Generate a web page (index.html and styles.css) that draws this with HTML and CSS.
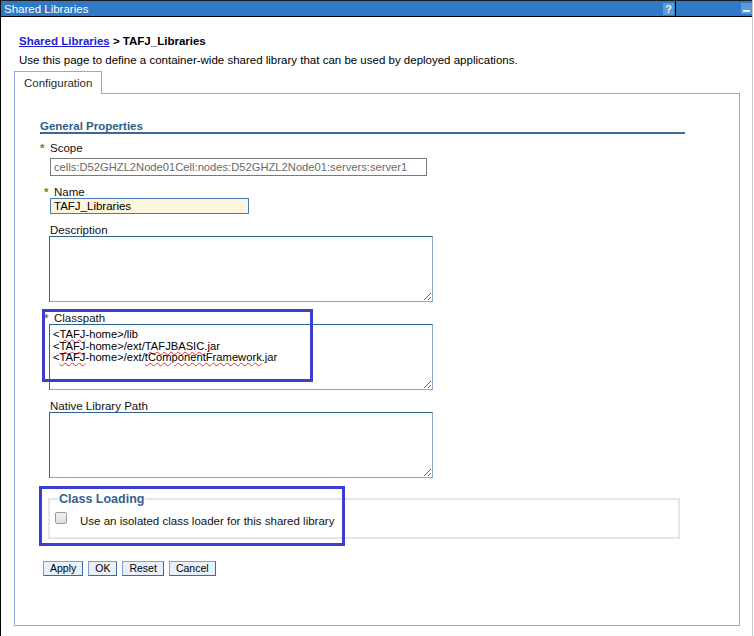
FILE: index.html
```html
<!DOCTYPE html>
<html lang="en">

<head>
    <meta charset="UTF-8">
    <meta name="viewport" content="width=device-width, initial-scale=1.0">
    <title>Shared Libraries</title>
    <link rel="stylesheet" href="styles.css">
</head>

<body>
    <div class="portlet">
        <div class="titlebar">
            <span class="title">Shared Libraries</span>
            <span class="help">?</span>
            <span class="divider"></span>
            <span class="minimize"></span>
        </div>

        <div class="content">
            <h1 class="crumb"><a href="#">Shared Libraries</a> &gt; TAFJ_Libraries</h1>
            <p class="intro">Use this page to define a container-wide shared library that can be used by deployed applications.</p>

            <div class="tabs">
                <span class="tab">Configuration</span>
            </div>

            <div class="panel">
                <h2 class="section">General Properties</h2>

                <div class="fields">
                    <label class="lbl req req_wide">Scope</label>
                    <input type="text" class="scope" value="cells:D52GHZL2Node01Cell:nodes:D52GHZL2Node01:servers:server1" readonly>

                    <label class="lbl req">Name</label>
                    <input type="text" class="name" value="TAFJ_Libraries">

                    <label class="lbl">Description</label>
                    <div class="area"></div>

                    <label class="lbl req">Classpath</label>
                    <div class="area">
                        <div>&lt;<span class="typo">TAFJ</span>-home&gt;/lib</div>
                        <div>&lt;<span class="typo">TAFJ</span>-home&gt;/ext/<span class="typo">TAFJBASIC</span>.jar</div>
                        <div>&lt;<span class="typo">TAFJ</span>-home&gt;/ext/<span class="typo">tComponentFramework</span>.jar</div>
                    </div>

                    <label class="lbl">Native Library Path</label>
                    <div class="area"></div>
                </div>

                <fieldset class="group">
                    <legend>Class Loading</legend>
                    <label class="check"><span class="box"></span><span class="check_text">Use an isolated class loader for this shared library</span></label>
                </fieldset>

                <div class="buttons">
                    <button type="button" class="btn">Apply</button>
                    <button type="button" class="btn">OK</button>
                    <button type="button" class="btn">Reset</button>
                    <button type="button" class="btn">Cancel</button>
                </div>

                <!-- marker frames drawn over the form -->
                <div class="mark mark_cp"></div>
                <div class="mark mark_cl"></div>
            </div>
        </div>
    </div>
</body>

</html>
```

FILE: styles.css
```css
* {
    margin: 0;
    padding: 0;
    box-sizing: border-box;
}

body {
    font-family: "Liberation Sans", Arial, sans-serif;
    font-size: 11.5px;
    color: #000;
    background: #fff;
}

.portlet {
    width: 753px;
    height: 636px;
    border-left: 1px solid #000;
    border-right: 1px solid #c9c9c9;
}

/* title bar */
.titlebar {
    height: 17px;
    background: #3079c7;
    border-top: 1px solid #1b1b1b;
    border-bottom: 1px solid #000;
    display: flex;
    align-items: center;
    color: #fff;
}

.title {
    flex: 1;
    padding-left: 3px;
    font-size: 11.5px;
    line-height: 14px;
}

.help {
    width: 11px;
    height: 12px;
    background: #5f98d6;
    color: #e8f1fb;
    font-size: 11px;
    font-weight: bold;
    line-height: 12px;
    text-align: center;
    margin-right: 1px;
}

.divider {
    width: 1px;
    align-self: stretch;
    background: #000;
}

.minimize {
    width: 11px;
    height: 11px;
    margin-left: 65px;
    background: #5f98d6;
    position: relative;
}

.minimize::after {
    content: "";
    position: absolute;
    left: 2px;
    right: 2px;
    bottom: 2px;
    height: 2px;
    background: #e8f1fb;
}

/* page body */
.content {
    padding: 18px 0 0 13px;
}

.crumb {
    font-size: 11.5px;
    font-weight: bold;
    line-height: 13px;
    margin-left: 5px;
}

.crumb a {
    color: #1d1dd8;
}

.intro {
    line-height: 13px;
    margin: 6px 0 0 5px;
}

.tabs {
    display: flex;
    margin-top: 4px;
}

.tab {
    position: relative;
    z-index: 1;
    height: 23px;
    padding: 0 9px;
    margin-bottom: -1px;
    border: 1px solid #8eaad8;
    border-bottom: none;
    background: #fff;
    color: #2a2a2a;
    line-height: 22px;
}

.panel {
    position: relative;
    width: 726px;
    height: 533px;
    border: 1px solid #8eaad8;
    padding: 24px 54px 0 25px;
}

.section {
    font-size: 11.5px;
    font-weight: bold;
    line-height: 11px;
    padding-top: 3px;
    color: #2e5d8c;
    border-bottom: 2px solid #3a6a99;
}

/* form fields */
.fields {
    display: flex;
    flex-direction: column;
    align-items: flex-start;
    padding-left: 10px;
}

.lbl {
    display: block;
    line-height: 12px;
    margin-top: 10px;
    color: #111;
    position: relative;
}

.fields .lbl:first-child {
    margin-top: 8px;
}

.req {
    margin-left: 4px;
}

.req_wide {
    margin-left: 0;
}

.req::before {
    content: "*";
    position: absolute;
    left: -10px;
    top: 0;
    color: #8a7410;
    font-weight: bold;
}

.scope {
    width: 377px;
    height: 18px;
    margin-top: 4px;
    padding: 0 3px;
    border: 1px solid #7a7a7a;
    font-family: inherit;
    font-size: 11.2px;
    color: #6a6a6a;
    outline: none;
}

.name {
    width: 199px;
    height: 16px;
    padding: 0 3px;
    border: 1px solid #4a7ab4;
    background: #fdf4dc;
    font-family: inherit;
    font-size: 11.5px;
    color: #000;
    outline: none;
}

.area {
    width: 384px;
    height: 66px;
    margin-left: -1px;
    border: 1px solid #8ca9cc;
    border-top-color: #2f6193;
    border-left-color: #2f6193;
    padding: 4px 3px 2px;
    font-size: 11.2px;
    line-height: 11.5px;
    overflow: auto;
    resize: vertical;
}

.typo {
    text-decoration: underline wavy #e03030;
    text-decoration-thickness: 1px;
    text-underline-offset: 1px;
}

/* class loading group */
.group {
    width: 632px;
    height: 46px;
    margin: 15px 0 0 8px;
    border: 2px solid #e6e6e6;
    padding: 0 8px;
}

.group legend {
    padding: 0 1px;
    font-size: 12.5px;
    font-weight: bold;
    color: #35618f;
    line-height: 12px;
}

.check {
    display: flex;
    align-items: flex-start;
    margin-top: 7px;
    color: #111;
}

.box {
    width: 12px;
    height: 12px;
    border: 1px solid #9a9a9a;
    border-radius: 2px;
    background: linear-gradient(#f2f2f2, #dcdcdc);
    margin: 0 13px 0 -3px;
}

.check_text {
    line-height: 13px;
    margin-top: 3px;
}

/* action buttons */
.buttons {
    display: flex;
    gap: 5px;
    margin: 22px 0 0 3px;
}

.btn {
    height: 15px;
    padding: 0 6px;
    border: 1px solid #7fa0c9;
    border-right-color: #3d6a9e;
    border-bottom-color: #3d6a9e;
    background: #e7f0fb;
    font-family: "Liberation Sans", Arial, sans-serif;
    font-size: 10.5px;
    line-height: 13px;
    color: #000;
}

.mark {
    position: absolute;
    border: 3px solid #3c3ecf;
}

.mark_cp {
    left: 27px;
    top: 215px;
    width: 271px;
    height: 73px;
}

.mark_cl {
    left: 24px;
    top: 392px;
    width: 306px;
    height: 60px;
}
```
